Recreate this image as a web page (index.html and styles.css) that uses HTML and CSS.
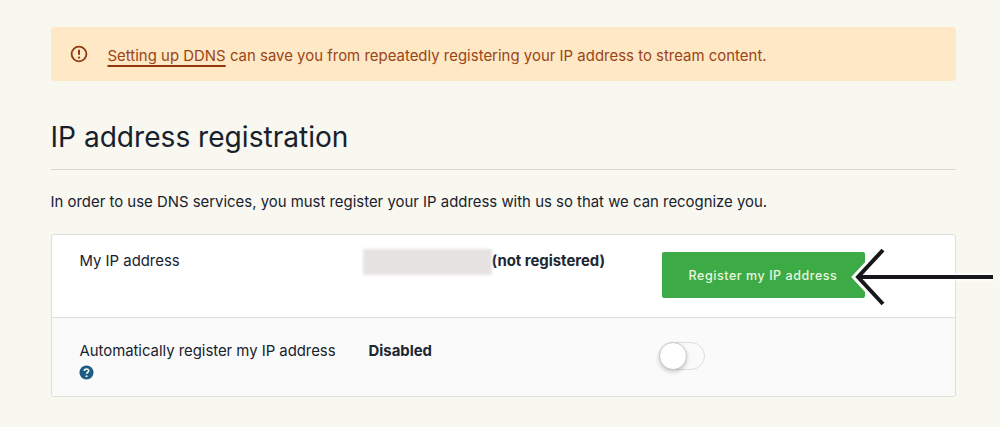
FILE: index.html
```html
<!DOCTYPE html>
<html lang="en">
<head>
<meta charset="utf-8">
<title>IP address registration</title>
<link rel="stylesheet" href="styles.css">
</head>
<body>
<main class="page">
  <div class="alert">
    <svg class="alert-icon" viewBox="0 0 18 18" width="18" height="18" aria-hidden="true">
      <circle cx="9" cy="9" r="7.4" fill="none" stroke="#8f3d10" stroke-width="1.8"/>
      <path d="M9 4.8v5" stroke="#8f3d10" stroke-width="2" fill="none"/>
      <circle cx="9" cy="12.6" r="1.1" fill="#8f3d10"/>
    </svg>
    <p class="alert-text"><a class="alert-link" href="#">Setting up DDNS</a> can save you from repeatedly registering your IP address to stream content.</p>
  </div>
  <h1 class="title">IP address registration</h1>
  <p class="intro">In order to use DNS services, you must register your IP address with us so that we can recognize you.</p>
  <section class="card">
    <div class="row row-first">
      <div class="label">My IP address</div>
      <div class="value value-ip"><span class="blur"></span><strong>(not registered)</strong></div>
      <div class="action"><button class="btn" type="button">Register my IP address</button></div>
    </div>
    <div class="row row-second">
      <div class="label">Automatically register my IP address
        <svg class="help" viewBox="0 0 16 16" width="15" height="15" aria-hidden="true">
          <circle cx="8" cy="8" r="7.5" fill="#1f5c84"/>
          <path d="M5.7 6.300c0-1.300 1-2.100 2.300-2.100s2.300.8 2.300 2c0 1.800-2.300 1.700-2.300 3.200" fill="none" stroke="#fff" stroke-width="1.700"/>
          <circle cx="8" cy="11.900" r="1.050" fill="#fff"/>
        </svg>
      </div>
      <div class="value"><strong>Disabled</strong></div>
      <div class="action"><span class="toggle"><span class="knob"></span></span></div>
    </div>
  </section>
</main>
<svg class="arrow" viewBox="0 0 150 70" width="150" height="70" aria-hidden="true">
  <path d="M32 7 L6 35 L32 63 M6 35 H143" fill="none" stroke="#fff" stroke-width="7"/>
  <path d="M33 8 L8 35 L33 62 M8 35 H143" fill="none" stroke="#17171b" stroke-width="4"/>
</svg>
</body>
</html>
```
FILE: styles.css
```css
* { box-sizing: border-box; }
html, body { margin: 0; height: 100%; }
body {
  background: #f8f7f0;
  color: #18222e;
  font-family: Inter, "Liberation Sans", sans-serif;
  font-size: 14.9px;
  overflow: hidden;
  position: relative;
}
.page { padding: 27px 44px 0 50.5px; }
.alert {
  height: 54px;
  background: #fee8c5;
  border-radius: 4px;
  display: flex;
  align-items: center;
  gap: 20px;
  padding: 0 0 0 19px;
  color: #9a4517;
}
.alert-icon { flex: none; }
.alert-text { margin: 3px 0 0; letter-spacing: 0.03px; }
.alert-link { color: #9a4517; text-decoration: underline; text-decoration-thickness: 2px; text-underline-offset: 3.500px; text-decoration-color: #93360c; }
.title {
  margin: 40px 0 0;
  height: 49px;
  font-size: 28.100px;
  font-weight: 400;
  line-height: 33px;
  border-bottom: 1px solid #d8d7d2;
  color: #17212c;
}
.intro { margin: 22px 0 0; line-height: 20px; letter-spacing: 0.01px; }
.card {
  margin-top: 22px;
  border: 1px solid #dfdeda;
  border-radius: 3px;
  background: #fff;
  overflow: hidden;
}
.row { display: flex; padding-left: 28px; }
.row-first { height: 83px; padding-top: 15.500px; border-bottom: 1px solid #dfdeda; }
.row-second { height: 78px; padding-top: 22.500px; background: #fafafa; }
.label { width: 289px; line-height: 20px; }
.row-second .label { letter-spacing: -0.02px; }
.help { display: block; margin: 4.500px 0 0 -0.500px; }
.value { width: 290px; line-height: 20px; }
.value-ip { display: flex; align-items: flex-start; margin-left: -6px; width: 296px; }
strong { font-weight: 700; color: #1c2733; }
.blur {
  width: 129px;
  height: 26px;
  margin-top: -2px;
  background: #e7e2e2;
  filter: blur(1.5px);
}
.btn {
  display: block;
  width: 203px;
  height: 46px;
  margin-top: 1px;
  padding: 2px 0 0;
  border: 0;
  border-radius: 2px;
  background: #3cab45;
  color: #e9f7df;
  font: 500 12.500px Inter, "Liberation Sans", sans-serif;
  letter-spacing: 0.55px;
}
.action { margin-left: 3px; }
.toggle {
  display: block;
  position: relative;
  width: 46px;
  height: 28px;
  margin: 1.500px 0 0 -3px;
  border: 1px solid #dcdcdc;
  border-radius: 14px;
}
.knob {
  position: absolute;
  left: -1px;
  top: -1px;
  width: 28px;
  height: 28px;
  border-radius: 50%;
  background: #fff;
  border: 1px solid #c9c9c9;
  box-shadow: 0 2px 4px rgba(0,0,0,.2);
}
.arrow { position: absolute; left: 850px; top: 241.500px; }
```
